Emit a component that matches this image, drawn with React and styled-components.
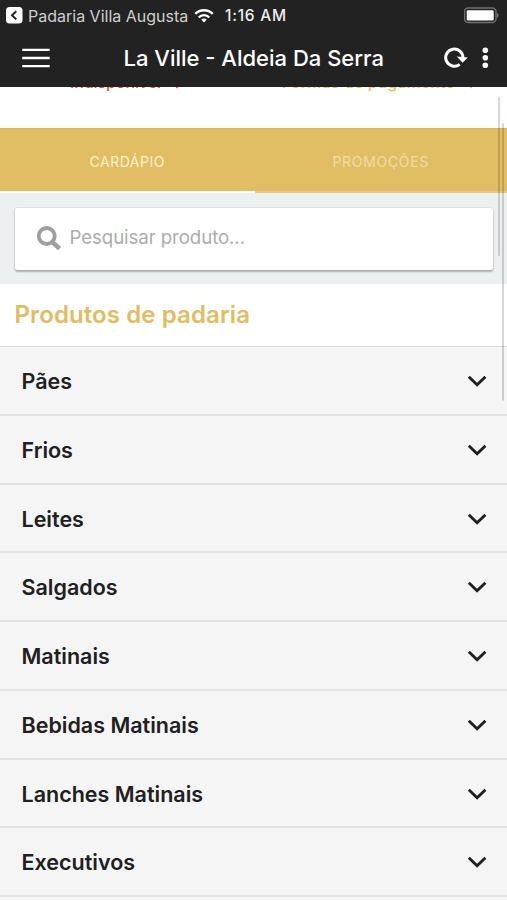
import React from "react";
import styled, { createGlobalStyle } from "styled-components";

const GlobalStyle = createGlobalStyle`
  * { box-sizing: border-box; }
  body {
    margin: 0;
    background: #f5f5f5;
    font-family: Inter, "Liberation Sans", sans-serif;
    overflow: hidden;
  }
`;

const Screen = styled.div`
  position: relative;
  width: 507px;
  height: 900px;
  overflow: hidden;
  display: flex;
  flex-direction: column;
  background: #f5f5f5;
`;

const Header = styled.header`
  flex: none;
  height: 87px;
  background: #222222;
  color: #fff;
`;

const StatusBar = styled.div`
  height: 30px;
  display: grid;
  grid-template-columns: 22px 166px 31px 1fr 37px;
  align-items: center;
  padding: 0 6px;
`;

const BackApp = styled.span`
  font-size: 16px;
  line-height: 30px;
  color: #cfcfcf;
  white-space: nowrap;
`;

const Clock = styled.span`
  padding-top: 1px;
  font-size: 15.5px;
  font-weight: 500;
  line-height: 30px;
  letter-spacing: 0.75px;
  color: #efefef;
  white-space: nowrap;
`;

const NavBar = styled.div`
  height: 57px;
  display: grid;
  grid-template-columns: 50px 1fr 46px;
  align-items: center;
  padding: 0 17px 2px 22px;
`;

const Title = styled.h1`
  margin: 0;
  padding-left: 51.5px;
  font-size: 22px;
  font-weight: 500;
  line-height: 30px;
  white-space: nowrap;
`;

const Actions = styled.div`
  justify-self: end;
  display: flex;
  align-items: center;
  gap: 14px;
`;

const InfoStrip = styled.div`
  flex: none;
  height: 41px;
  display: grid;
  grid-template-columns: 1fr 1fr;
  background: #fff;
  overflow: hidden;
`;

const InfoText = styled.div`
  height: 20px;
  margin-top: -15px;
  padding-left: ${(p) => p.$left};
  display: flex;
  align-items: flex-end;
  gap: 10px;
  font-size: 16px;
  font-weight: 500;
  line-height: 20px;
  letter-spacing: ${(p) => p.$spacing};
  color: ${(p) => p.$color};
  white-space: nowrap;
`;

const Tabs = styled.nav`
  flex: none;
  height: 65px;
  display: grid;
  grid-template-columns: 254.5px 1fr;
  background: #e1be64;
  border-top: 1px solid #d9b964;
`;

const Tab = styled.div`
  height: 64px;
  display: flex;
  align-items: center;
  justify-content: center;
  padding-top: 2px;
  font-size: 14px;
  letter-spacing: ${(p) => p.$spacing};
  color: ${(p) => (p.$active ? "#fff1cc" : "#f1dca6")};
  border-bottom: ${(p) => (p.$active ? "2px solid #fff" : "2px solid #e6c97f")};
`;

const SearchArea = styled.div`
  flex: none;
  height: 91px;
  padding: 15px 14px 14px 15px;
  background: #edf0f1;
`;

const SearchBox = styled.div`
  height: 62px;
  display: flex;
  align-items: center;
  gap: 7.5px;
  padding: 0 0 2px 21px;
  background: #fff;
  border-radius: 2px;
  box-shadow: 0 2px 2px rgba(0, 0, 0, 0.25), 0 0 2px rgba(0, 0, 0, 0.22);
`;

const Placeholder = styled.span`
  padding-bottom: 2px;
  font-size: 18.7px;
  letter-spacing: -0.1px;
  color: #acacac;
`;

const SectionTitle = styled.h2`
  flex: none;
  height: 63.2px;
  margin: 0;
  padding-left: 14.5px;
  background: #fff;
  border-bottom: 1px solid #dcdcdc;
  font-size: 24px;
  font-weight: 600;
  line-height: 61px;
  letter-spacing: 0.1px;
  color: #e0bc62;
`;

const List = styled.ul`
  flex: none;
  margin: 0;
  padding: 0;
  list-style: none;
`;

const Row = styled.li`
  height: 68.75px;
  display: flex;
  align-items: center;
  justify-content: space-between;
  padding: 1px 20px 0 21.5px;
  background: #f5f5f5;
  border-bottom: 2px solid #e3e3e3;
  font-size: 21.5px;
  font-weight: 600;
  line-height: 30px;
  color: #202020;
`;

const Scrollbar = styled.div`
  position: absolute;
  left: ${(p) => p.$left};
  top: ${(p) => p.$top};
  width: 2px;
  height: ${(p) => p.$height};
  border-radius: 1px;
  background: rgba(0, 0, 0, 0.16);
`;

const BackIcon = () => (
  <svg width="17" height="17" viewBox="0 0 17 17" fill="none">
    <rect x="0" y="0" width="16.5" height="16.5" rx="3.5" fill="#fff" />
    <path d="M10.3 4.2 6 8.3l4.3 4.1" stroke="#222" strokeWidth="2" />
  </svg>
);

const WifiIcon = () => (
  <svg width="20" height="16" viewBox="0 0 20 16" fill="none" stroke="#fff" strokeWidth="2.4">
    <path d="M1.3 5.8a12.3 12.3 0 0 1 17.4 0" />
    <path d="M4.7 9.3a7.5 7.5 0 0 1 10.6 0" />
    <path d="M10 14.5 7.3 11.8a3.8 3.8 0 0 1 5.4 0Z" fill="#fff" stroke="none" />
  </svg>
);

const BatteryIcon = () => (
  <svg width="36" height="17" viewBox="0 0 36 17">
    <rect x="0.5" y="1" width="31.5" height="14.5" rx="3.8" fill="none" stroke="#707070" strokeWidth="1.4" />
    <rect x="2.7" y="3.2" width="27" height="10.2" rx="1.2" fill="#fff" />
    <path d="M33 6v4.7c2-.6 2-4.1 0-4.7Z" fill="#777" />
  </svg>
);

const MenuIcon = () => (
  <svg width="28" height="20" viewBox="0 0 28 20" stroke="#fff" strokeWidth="2.3">
    <path d="M.2 1.8h27.5M.2 10h27.5M.2 18.2h27.5" />
  </svg>
);

const RefreshIcon = () => (
  <svg width="24" height="22" viewBox="0 0 24 22" fill="none">
    <path d="M15.7 17.3A8.6 8.6 0 1 1 18.9 11" stroke="#fff" strokeWidth="3" />
    <path d="M12.8 9.6 23.8 10.6 18.6 15.8Z" fill="#fff" />
  </svg>
);

const MoreIcon = () => (
  <svg width="8" height="22" viewBox="0 0 8 22" fill="#fff">
    <circle cx="3.3" cy="3.2" r="2.8" />
    <circle cx="3.3" cy="10.7" r="2.8" />
    <circle cx="3.3" cy="18.2" r="2.8" />
  </svg>
);

const SearchIcon = () => (
  <svg width="26" height="26" viewBox="0 0 26 26" fill="none" stroke="#9e9e9e">
    <circle cx="10.7" cy="11" r="8" strokeWidth="3.8" />
    <path d="m16.3 16.8 7.2 6.8" strokeWidth="4.6" />
  </svg>
);

const ChevronIcon = () => (
  <svg width="20" height="12" viewBox="0 0 20 12" fill="none" stroke="#202020" strokeWidth="2.9">
    <path d="m1.8 1.8 8.3 7.9 8.3-7.9" />
  </svg>
);

const SmallChevron = () => (
  <svg width="12" height="12" viewBox="0 0 12 12" fill="none" stroke="currentColor" strokeWidth="1.8">
    <path d="m1.5 2.5 4.5 4.7 4.5-4.7" />
  </svg>
);

const categories = [
  "Pães",
  "Frios",
  "Leites",
  "Salgados",
  "Matinais",
  "Bebidas Matinais",
  "Lanches Matinais",
  "Executivos",
];

export default function App() {
  return (
    <Screen>
      <GlobalStyle />
      <Header>
        <StatusBar>
          <BackIcon />
          <BackApp>Padaria Villa Augusta</BackApp>
          <WifiIcon />
          <Clock>1:16 AM</Clock>
          <BatteryIcon />
        </StatusBar>
        <NavBar>
          <MenuIcon />
          <Title>La Ville - Aldeia Da Serra</Title>
          <Actions>
            <RefreshIcon />
            <MoreIcon />
          </Actions>
        </NavBar>
      </Header>
      <InfoStrip>
        <InfoText $left="70px" $color="#e5473c" $spacing="-0.1px">
          <span>Indisponível</span>
          <SmallChevron />
        </InfoText>
        <InfoText $left="28.5px" $color="#e0bc62" $spacing="0.12px">
          <span>Formas de pagamento</span>
          <SmallChevron />
        </InfoText>
      </InfoStrip>
      <Tabs>
        <Tab $active $spacing="0.5px">CARDÁPIO</Tab>
        <Tab $spacing="0.7px">PROMOÇÕES</Tab>
      </Tabs>
      <SearchArea>
        <SearchBox>
          <SearchIcon />
          <Placeholder>Pesquisar produto...</Placeholder>
        </SearchBox>
      </SearchArea>
      <SectionTitle>Produtos de padaria</SectionTitle>
      <List>
        {categories.map((name) => (
          <Row key={name}>
            <span>{name}</span>
            <ChevronIcon />
          </Row>
        ))}
      </List>
      <Scrollbar $left="498px" $top="97px" $height="159px" />
      <Scrollbar $left="502px" $top="123px" $height="278px" />
    </Screen>
  );
}
